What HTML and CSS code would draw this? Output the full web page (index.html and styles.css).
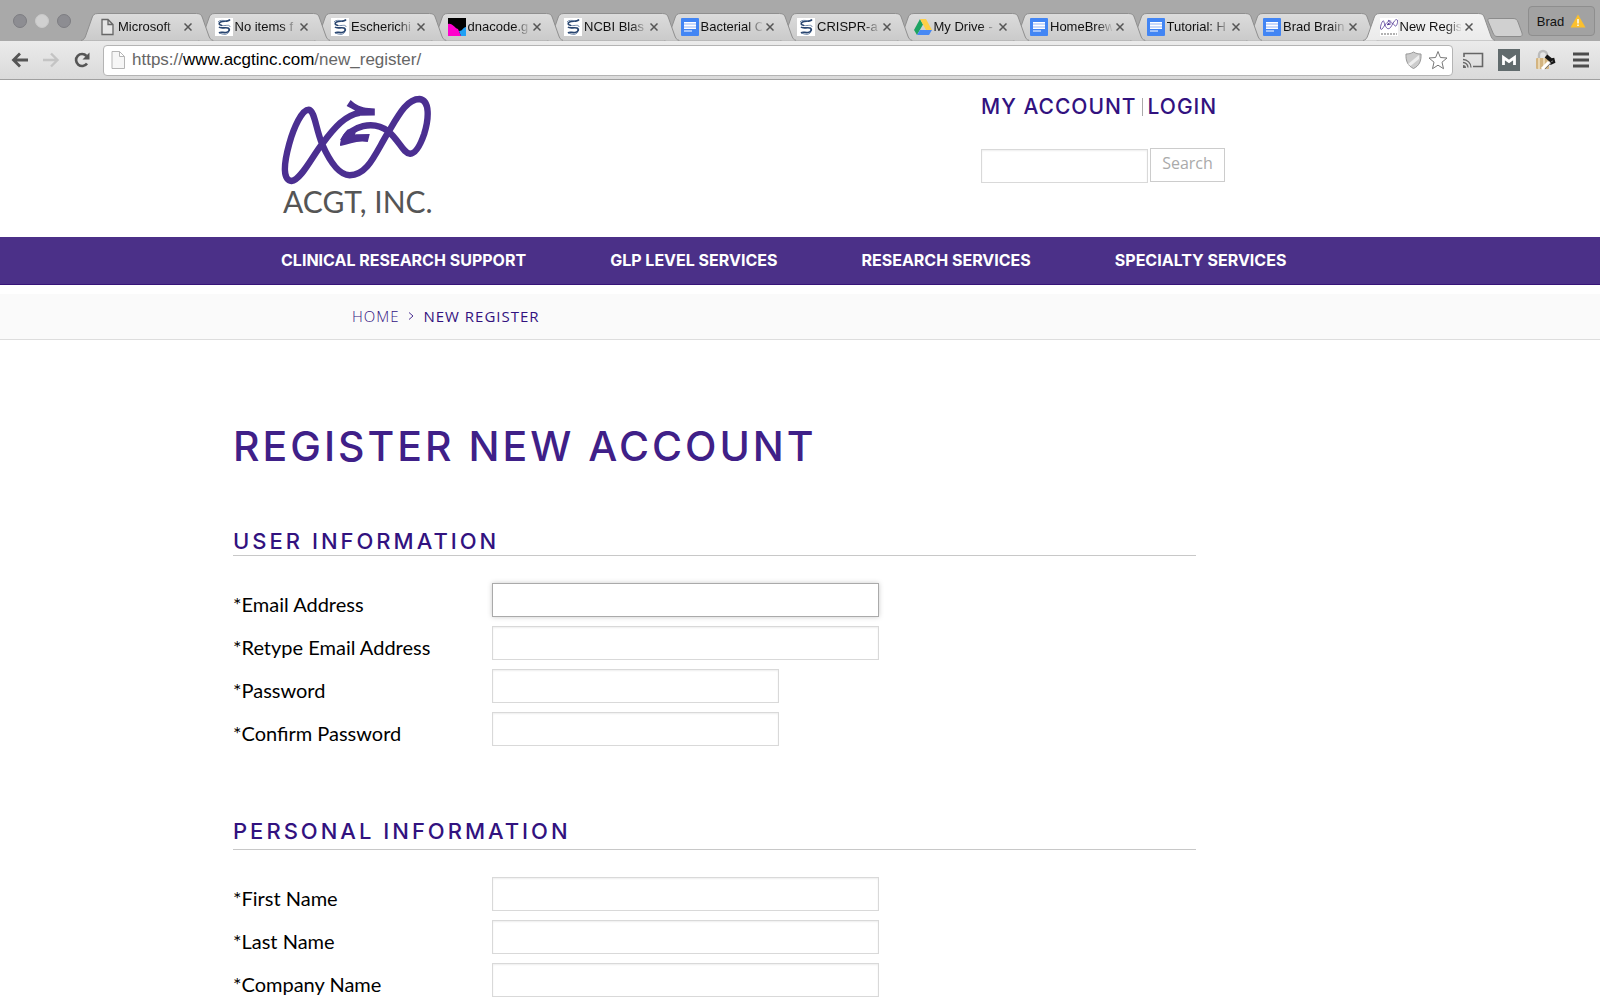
FILE: index.html
```html
<!DOCTYPE html>
<html lang="en">
<head>
<meta charset="utf-8">
<title>New Register</title>
<link rel="stylesheet" href="styles.css">
</head>
<body>
<svg class="defs" aria-hidden="true">
  <defs>
    <linearGradient id="tab-fill" x1="0" y1="0" x2="0" y2="1"><stop offset="0" stop-color="#dcdcdc"/><stop offset="1" stop-color="#cacaca"/></linearGradient>
    <linearGradient id="tab-on" x1="0" y1="0" x2="0" y2="1"><stop offset="0" stop-color="#f3f3f3"/><stop offset="1" stop-color="#ebebeb"/></linearGradient>
  </defs>
  <symbol id="tab-shape" viewBox="0 0 133 28" preserveAspectRatio="none">
    <path d="M0 27.500C3 27 4 25 5 22L11 5C12 2 13 .5 17 .5H116C120 .5 121 2 122 5L128 22C129 25 130 27 133 27.500" stroke="#8f8f8f" vector-effect="non-scaling-stroke"/>
  </symbol>
  <symbol id="ncbi" viewBox="0 0 18 18">
    <rect width="18" height="18" fill="#fff"/>
    <path d="M15 1.500C13 4.500 9 2.500 5.500 4C3 5.500 4 7 7 7.500" fill="none" stroke="#27446f" stroke-width="1.500"/>
    <path d="M4 9C6 11 10 9 13 10C15.500 11.500 14 14 11 14.500C8 15 6 13.500 4 15" fill="none" stroke="#27446f" stroke-width="1.700"/>
    <path d="M7 7.500C11 8 15 6 15 9M3 4C4 2 9 2 11 3M14 14C12 17 8 17 5 15" fill="none" stroke="#6f87a8" stroke-width="1"/>
  </symbol>
  <symbol id="docs" viewBox="0 0 18 18">
    <rect width="18" height="18" rx="1" fill="#4285f4"/>
    <rect x="3" y="4" width="12" height="6" fill="#c9d9fb"/>
    <path d="M3 4.500H15M3 7.500H15M3 10.500H15M3 13H11" stroke="#fff" stroke-width="1.200"/>
  </symbol>
  <symbol id="knot" viewBox="66 44 446 268">
    <path d="M300 97C258 103 225 140 188 190C160 225 125 298 97 300C72 298 72 255 90 190C104 140 128 88 148 88C166 90 168 140 188 190C212 245 238 282 270 283C325 282 345 220 385 155C415 105 440 56 478 56C510 60 506 115 492 160C480 195 465 218 450 219C430 218 418 180 385 152C340 118 275 135 250 182" fill="none" stroke="#4b2f91" stroke-width="19"/>
    <path d="M261 77L273 59C284 70 298 79 318 82L345 84V105L300 106L280 98L286 90C278 86 270 82 261 77ZM241 194C243 172 252 158 265 146L284 150C292 160 282 164 290 161L330 160L324 184C295 178 268 190 243 196Z" fill="#4b2f91"/>
  </symbol>
</svg>

<header class="browser">
  <div class="strip">
    <div class="lights"><i></i><i></i><i></i></div>
    <div class="tabs">
      <div class="tab"><svg class="shape"><use href="#tab-shape"/></svg><svg class="icon" viewBox="0 0 18 18"><path d="M4 1.500H10L15 6.500V16.500H4ZM10 1.500V6.500H15" fill="#e6e6e6" stroke="#666" stroke-width="1.300"/></svg><span>Microsoft</span><button aria-label="Close tab"><svg viewBox="0 0 8 8"><path d="M.5.5l7 7m0-7l-7 7"/></svg></button></div>
      <div class="tab"><svg class="shape"><use href="#tab-shape"/></svg><svg class="icon"><use href="#ncbi"/></svg><span>No items f</span><button aria-label="Close tab"><svg viewBox="0 0 8 8"><path d="M.5.5l7 7m0-7l-7 7"/></svg></button></div>
      <div class="tab"><svg class="shape"><use href="#tab-shape"/></svg><svg class="icon"><use href="#ncbi"/></svg><span>Escherichi</span><button aria-label="Close tab"><svg viewBox="0 0 8 8"><path d="M.5.5l7 7m0-7l-7 7"/></svg></button></div>
      <div class="tab"><svg class="shape"><use href="#tab-shape"/></svg><svg class="icon" viewBox="0 0 18 18"><path fill="#000" d="M0 0H18V18H0Z"/><path fill="#f0c" d="M0 6C5 5 6 10 10 11L13 18H0Z"/><path fill="#1ea0f5" d="M18 9V18H13L11 13C15 13 15 9 18 9Z"/></svg><span>dnacode.g</span><button aria-label="Close tab"><svg viewBox="0 0 8 8"><path d="M.5.5l7 7m0-7l-7 7"/></svg></button></div>
      <div class="tab"><svg class="shape"><use href="#tab-shape"/></svg><svg class="icon"><use href="#ncbi"/></svg><span>NCBI Blas</span><button aria-label="Close tab"><svg viewBox="0 0 8 8"><path d="M.5.5l7 7m0-7l-7 7"/></svg></button></div>
      <div class="tab"><svg class="shape"><use href="#tab-shape"/></svg><svg class="icon"><use href="#docs"/></svg><span>Bacterial C</span><button aria-label="Close tab"><svg viewBox="0 0 8 8"><path d="M.5.5l7 7m0-7l-7 7"/></svg></button></div>
      <div class="tab"><svg class="shape"><use href="#tab-shape"/></svg><svg class="icon"><use href="#ncbi"/></svg><span>CRISPR-a</span><button aria-label="Close tab"><svg viewBox="0 0 8 8"><path d="M.5.5l7 7m0-7l-7 7"/></svg></button></div>
      <div class="tab"><svg class="shape"><use href="#tab-shape"/></svg><svg class="icon" viewBox="0 0 18 18"><path fill="#1da362" d="M6 1L0 12L3 17L9 6.500Z"/><path fill="#ffcf48" d="M6 1H12L18 12H12Z"/><path fill="#4688f4" d="M6 12H18L15 17H3Z"/></svg><span>My Drive -</span><button aria-label="Close tab"><svg viewBox="0 0 8 8"><path d="M.5.5l7 7m0-7l-7 7"/></svg></button></div>
      <div class="tab"><svg class="shape"><use href="#tab-shape"/></svg><svg class="icon"><use href="#docs"/></svg><span>HomeBrew</span><button aria-label="Close tab"><svg viewBox="0 0 8 8"><path d="M.5.5l7 7m0-7l-7 7"/></svg></button></div>
      <div class="tab"><svg class="shape"><use href="#tab-shape"/></svg><svg class="icon"><use href="#docs"/></svg><span>Tutorial: H</span><button aria-label="Close tab"><svg viewBox="0 0 8 8"><path d="M.5.5l7 7m0-7l-7 7"/></svg></button></div>
      <div class="tab"><svg class="shape"><use href="#tab-shape"/></svg><svg class="icon"><use href="#docs"/></svg><span>Brad Brain</span><button aria-label="Close tab"><svg viewBox="0 0 8 8"><path d="M.5.5l7 7m0-7l-7 7"/></svg></button></div>
      <div class="tab active"><svg class="shape"><use href="#tab-shape"/></svg><svg class="icon" viewBox="0 0 18 18"><path fill="#fff" d="M0 0H18V18H0Z"/><svg x="0" y="0" width="18" height="13"><use href="#knot"/></svg><path d="M1 16H17" stroke="#999" stroke-width="1.500" stroke-dasharray="2 1"/></svg><span>New Regis</span><button aria-label="Close tab"><svg viewBox="0 0 8 8"><path d="M.5.5l7 7m0-7l-7 7"/></svg></button></div>
    </div>
    <button class="newtab" aria-label="New tab"><svg viewBox="0 0 36 19"><path d="M3 .5H26C29 .5 30 1.500 31 4L35 15C35.500 17 35 18.500 33 18.500H10C8 18.500 7 17 6 15L1 3C.5 1.500 1 .5 3 .5Z" fill="#d0d0d0" stroke="#8c8c8c"/></svg></button>
    <button class="profile">Brad <svg viewBox="0 0 16 14"><path d="M8 .5L15.500 13.500H.5Z" fill="#fbc02d"/><path d="M8 5V9.500M8 10.500V12" stroke="#fff" stroke-width="1.500"/></svg></button>
  </div>
  <div class="toolbar">
    <button aria-label="Back"><svg viewBox="0 0 18 18"><path d="M17 9H3M9 2.500L2.500 9L9 15.500" fill="none" stroke="#555" stroke-width="2.800"/></svg></button>
    <button aria-label="Forward"><svg viewBox="0 0 18 18"><path d="M1 9H15M9 2.500L15.500 9L9 15.500" fill="none" stroke="#c4c4c4" stroke-width="2.400"/></svg></button>
    <button aria-label="Reload"><svg viewBox="0 0 18 18"><path d="M14 12.500A6 6 0 1 1 13.500 5" fill="none" stroke="#555" stroke-width="2.600"/><path d="M16.500 1.500V8.500H9.500Z" fill="#555"/></svg></button>
    <div class="omnibox">
      <svg class="page" viewBox="0 0 14 18"><path d="M1 .5H8.500L13.500 5.500V17.500H1ZM8.500 .5V5.500H13.500" fill="#f6f6f6" stroke="#b5b5b5"/></svg>
      <div class="url">https://<b>www.acgtinc.com</b>/new_register/</div>
      <svg class="shield" viewBox="0 0 17 18"><path d="M8.500 1C11 2.500 13 3 16 3C16.500 10 14 15 8.500 17.500C3 15 .5 10 1 3C4 3 6 2.500 8.500 1Z" fill="#ccc" stroke="#999"/><path d="M3 13L14 4V8L5.500 15Z" fill="#eee"/></svg>
      <svg class="star" viewBox="0 0 20 20"><path d="M10 1.500L12.400 7.500L19 8L14 12.200L15.500 18.700L10 15.200L4.500 18.700L6 12.200L1 8L7.600 7.500Z" fill="#fff" stroke="#777"/></svg>
    </div>
    <button class="ext" aria-label="Cast"><svg viewBox="0 0 22 18"><path d="M2 6V2.500H20.500V15.500H11" fill="none" stroke="#666" stroke-width="1.600"/><path d="M1 8.500A8 8 0 0 1 9 16.500M1 11.500A5 5 0 0 1 6 16.500" fill="none" stroke="#666" stroke-width="1.300"/><path d="M1 14A3 3 0 0 1 4 17H1Z" fill="#666"/></svg></button>
    <button class="ext" aria-label="Mail"><svg viewBox="0 0 22 22"><path fill="#616b6d" d="M0 0H22V22H0Z"/><path d="M5.500 16V8.500L11 12.500L16.500 8.500V16" fill="none" stroke="#fff" stroke-width="2.800"/></svg></button>
    <button class="ext" aria-label="Privacy"><svg viewBox="0 0 22 22"><path d="M5 10V6A4 4 0 0 1 13 6V10" fill="none" stroke="#bbb" stroke-width="2.400"/><rect x="2" y="9" width="13" height="11" rx="1" fill="#d3b480"/><path d="M5 9V20M10 9V20" stroke="#ead6b0" stroke-width="2"/><path d="M12 7L18 12" stroke="#161616" stroke-width="4"/><path d="M19 9L20 13L16 15" fill="none" stroke="#161616" stroke-width="2.500"/><path d="M15 13L8 20" stroke="#fff" stroke-width="3"/><path d="M17 14L11 20" stroke="#777"/></svg></button>
    <button class="ext" aria-label="Menu"><svg viewBox="0 0 22 20"><path d="M3 4H19M3 10H19M3 16H19" stroke="#4c4c4c" stroke-width="3.200"/></svg></button>
  </div>
</header>

<div class="masthead">
  <a class="logo" href="#"><svg><use href="#knot"/></svg><span>ACGT, INC.</span></a>
  <div class="tools">
    <div class="account"><a href="#">MY ACCOUNT</a><i></i><a href="#">LOGIN</a></div>
    <form class="search"><input type="text" aria-label="Search"><button type="button">Search</button></form>
  </div>
</div>

<nav class="menu">
  <a href="#">CLINICAL RESEARCH SUPPORT</a>
  <a href="#">GLP LEVEL SERVICES</a>
  <a href="#">RESEARCH SERVICES</a>
  <a href="#">SPECIALTY SERVICES</a>
</nav>

<nav class="crumbs" aria-label="Breadcrumb">
  <a href="#">HOME</a>
  <svg viewBox="0 0 6 10"><path d="M1 1.500L5 5L1 8.500" fill="none" stroke="#4b2f91"/></svg>
  <span>NEW REGISTER</span>
</nav>

<main>
  <h1>REGISTER NEW ACCOUNT</h1>
  <form>
    <section>
      <h2>USER INFORMATION</h2>
      <div class="row"><label for="email">*Email Address</label><input class="focus" id="email" type="email"></div>
      <div class="row"><label for="email2">*Retype Email Address</label><input id="email2" type="email"></div>
      <div class="row"><label for="pw">*Password</label><input class="short" id="pw" type="password"></div>
      <div class="row"><label for="pw2">*Confirm Password</label><input class="short" id="pw2" type="password"></div>
    </section>
    <section class="personal">
      <h2>PERSONAL INFORMATION</h2>
      <div class="row"><label for="first">*First Name</label><input id="first" type="text"></div>
      <div class="row"><label for="last">*Last Name</label><input id="last" type="text"></div>
      <div class="row"><label for="company">*Company Name</label><input id="company" type="text"></div>
    </section>
  </form>
</main>
</body>
</html>
```
FILE: styles.css
```css
* { box-sizing: border-box; }
html { overflow: hidden; }
body { margin: 0; background: #fff; color: #111; font-family: Lato, sans-serif; }
a { color: inherit; text-decoration: none; }
button { border: 0; padding: 0; background: none; font: inherit; color: inherit; }
svg { display: block; }
.defs { position: absolute; width: 0; height: 0; }

/* Browser window */
.browser { font-family: "Liberation Sans", sans-serif; font-size: 13px; }
.strip { display: flex; align-items: flex-end; height: 41px; padding-right: 5px; background: #a9a9a9; }
.lights { display: flex; gap: 8px; width: 81px; padding: 0 0 13px 13px; }
.lights i { width: 14px; height: 14px; border: 1px solid #7d7d82; border-radius: 50%; background: #8d8d92; }
.lights i:nth-child(2) { border-color: #c9c9c9; background: #d0d0d0; }
.tabs { display: flex; flex: 1; min-width: 0; padding-right: 16px; }
.tab { position: relative; display: flex; align-items: center; flex: 1 1 0; min-width: 0; height: 28px; margin-right: -16px; padding: 0 15px 1px 17px; }
.shape { position: absolute; left: 0; top: 0; width: 100%; height: 100%; fill: url(#tab-fill); }
.icon { position: relative; flex: none; width: 18px; height: 18px; margin-right: 2px; }
.tab span { position: relative; flex: 1; min-width: 0; overflow: hidden; white-space: nowrap; color: #111; mask-image: linear-gradient(90deg, #000 76%, rgba(0, 0, 0, .1)); }
.tab button { position: relative; width: 8px; margin: 0 7px 0 4px; }
.tab button svg { width: 8px; height: 8px; stroke: #555; stroke-width: 1.5; }
.tab:nth-child(1) { z-index: 12; }
.tab:nth-child(2) { z-index: 11; }
.tab:nth-child(3) { z-index: 10; }
.tab:nth-child(4) { z-index: 9; }
.tab:nth-child(5) { z-index: 8; }
.tab:nth-child(6) { z-index: 7; }
.tab:nth-child(7) { z-index: 6; }
.tab:nth-child(8) { z-index: 5; }
.tab:nth-child(9) { z-index: 4; }
.tab:nth-child(10) { z-index: 3; }
.tab:nth-child(11) { z-index: 2; }
.tab.active { z-index: 13; }
.active .shape { fill: url(#tab-on); }
.newtab { width: 36px; margin: 0 5px 4px -8px; }
.newtab svg { width: 36px; height: 19px; }
.profile { display: flex; align-items: center; justify-content: center; gap: 6px; width: 67px; height: 30px; margin-bottom: 5px; border: 1px solid #8e8e8e; border-radius: 4px; background: #a2a2a2; color: #111; }
.profile svg { width: 16px; height: 14px; }
.toolbar { display: flex; align-items: center; height: 39px; padding: 0 8px 0 11px; border-bottom: 1px solid #a0a0a0; background: linear-gradient(#ebebeb, #dadada); }
.toolbar button { margin-right: 13px; }
.toolbar button + .omnibox { margin-left: -1px; }
.toolbar button svg { width: 18px; height: 18px; }
.omnibox { display: flex; align-items: center; flex: 1; height: 31px; margin-right: 9px; padding: 0 4px 0 7px; border: 1px solid #b4b4b4; border-radius: 4px; background: #fff; }
.page { width: 14px; height: 18px; }
.url { flex: 1; padding-left: 7px; font-size: 17px; color: #666; }
.url b { font-weight: 400; color: #000; }
.shield { width: 17px; height: 18px; margin-right: 6px; }
.star { width: 20px; height: 20px; }
.toolbar .ext { margin: 0 0 0 14px; }
.toolbar .omnibox + .ext { margin-left: 0; }
.toolbar .ext svg { width: 22px; height: 22px; }

/* Site header */
.masthead { display: flex; height: 157px; padding: 15px 0 0 281px; }
.logo { width: 700px; }
.logo svg { width: 150px; height: 90px; }
.logo span { display: block; padding-left: 2px; font-size: 30px; line-height: 32px; color: #555; }
.account { display: flex; align-items: center; height: 24px; font: 500 21px/24px Inter, sans-serif; letter-spacing: 1px; color: #32127f; }
.account i { width: 1px; height: 18px; margin: 0 5px; background: #aaa; }
.search { display: flex; gap: 2px; margin-top: 29px; }
input { width: 387px; height: 34px; border: 1px solid #d9d9d9; background: #fff; box-shadow: inset 0 1px 2px #eee; }
.search input { width: 167px; margin-top: 1px; }
.search button { width: 75px; height: 34px; padding-bottom: 5px; border: 1px solid #ccc; background: #fff; color: #aaa; font: 16px "Open Sans", sans-serif; }
.menu { display: flex; align-items: center; gap: 84px; height: 48px; padding: 0 0 1px 281px; background: #4b3088; border-bottom: 1px solid #371478; color: #fff; font: 700 16px Inter, sans-serif; white-space: nowrap; }
.crumbs { display: flex; align-items: center; height: 46px; margin-top: 9px; padding: 0 0 2px 352px; background: #fafafa; border-bottom: 1px solid #ddd; color: #32127f; font: 15px "Open Sans", sans-serif; letter-spacing: 1px; }
.crumbs a { font-weight: 300; }
.crumbs svg { width: 6px; height: 10px; margin: 0 9px; }

/* Registration form */
main { padding: 82px 404px 0 233px; }
h1, h2 { margin: 0; color: #3f2088; font-family: Inter, sans-serif; font-weight: 500; }
h1 { font-size: 41px; line-height: 48px; letter-spacing: 3px; }
h2 { margin-bottom: 27px; border-bottom: 1px solid #c8c8c8; color: #32127f; font-size: 22px; line-height: 28px; letter-spacing: 3px; }
section { padding-top: 57px; }
.personal { padding-top: 62px; }
.personal h2 { padding-bottom: 4px; }
.row { display: grid; grid-template-columns: 259px 1fr; height: 43px; }
label { padding-top: 8px; font-size: 20px; line-height: 26px; color: #000; }
.short { width: 287px; }
.focus { border-color: #aaa; box-shadow: 0 0 5px #ccc; }
```
